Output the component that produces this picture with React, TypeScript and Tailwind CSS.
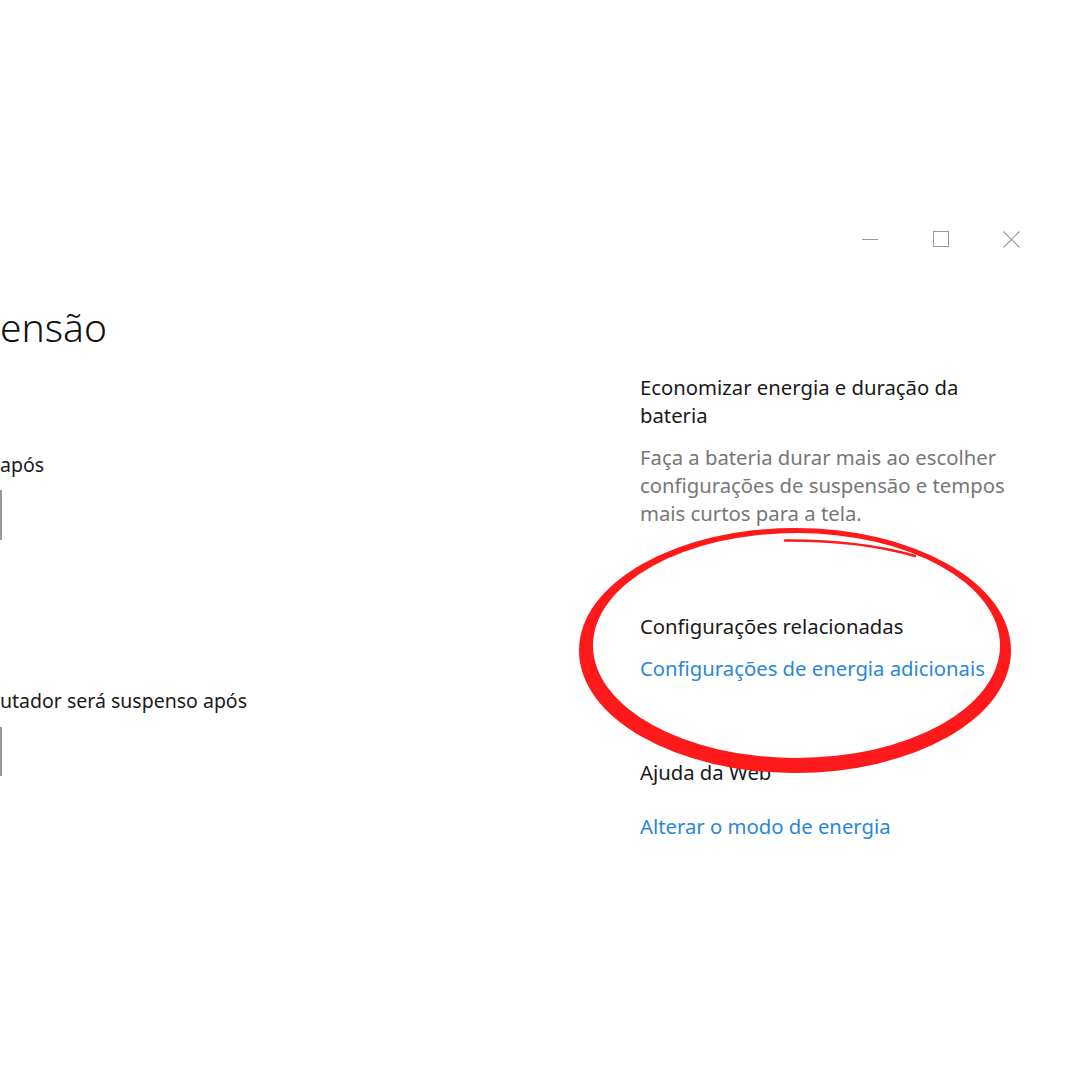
const WinButton = ({ children }: { children: React.ReactNode }) => (
  <div className="w-[71px] h-[32px] flex items-center justify-center">{children}</div>
);

const RedCircle = () => (
  <svg className="absolute left-0 top-0 pointer-events-none" width="1080" height="1080" viewBox="0 0 1080 1080">
    <path
      fillRule="evenodd"
      fill="#fe1a1a"
      d="M579 650.5 A216 122.5 0 1 0 1011 650.5 A216 122.5 0 1 0 579 650.5 Z M593 645.5 A203.5 112.5 0 1 0 1000 645.5 A203.5 112.5 0 1 0 593 645.5 Z"
    />
    <path d="M785 540.5 Q 860 540 915 556" stroke="#fe1a1a" strokeWidth="2.5" fill="none" strokeLinecap="round" />
    <path d="M870 533 Q 888 536 896 540" stroke="#ffffff" strokeWidth="3" fill="none" />
  </svg>
);

export default function App() {
  return (
    <div
      className="w-[1080px] h-[1080px] bg-white relative overflow-hidden text-[#1a1a1a]"
      style={{ fontFamily: '"Noto Sans", "Open Sans", sans-serif' }}
    >
      {/* window controls */}
      <div className="flex justify-end pt-[223px] pr-[33px]">
        <WinButton>
          <svg width="16" height="16" viewBox="0 0 16 16">
            <path d="M0 8.5 H16" stroke="#999" strokeWidth="1" />
          </svg>
        </WinButton>
        <WinButton>
          <svg width="16" height="16" viewBox="0 0 16 16">
            <rect x="0.5" y="0.5" width="15" height="15" stroke="#999" strokeWidth="1" fill="none" />
          </svg>
        </WinButton>
        <WinButton>
          <svg width="17" height="17" viewBox="0 0 17 17">
            <path d="M0.5 0.5 L16.5 16.5 M16.5 0.5 L0.5 16.5" stroke="#999" strokeWidth="1.1" fill="none" />
          </svg>
        </WinButton>
      </div>

      <div className="flex">
        {/* left column, cut off by the screen edge */}
        <div className="w-[640px] flex flex-col items-start">
          <div className="mt-[48px] text-[39px] leading-[48px] font-light text-[#111]">ensão</div>
          <div className="mt-[100px] text-[19.5px] leading-[28px]">após</div>
          <div className="mt-[11px] w-[2px] h-[50px] bg-[#999]" />
          <div className="mt-[147px] text-[19.5px] leading-[28px]">utador será suspenso após</div>
          <div className="mt-[12px] w-[2px] h-[49px] bg-[#999]" />
        </div>

        {/* right column */}
        <div className="w-[390px] mt-[118px] text-[20.3px] leading-[28px]">
          <div className="w-[340px]">Economizar energia e duração da bateria</div>
          <p className="mt-[14px] text-[#777] w-[385px]">
            Faça a bateria durar mais ao escolher configurações de suspensão e tempos mais curtos para a tela.
          </p>
          <div className="mt-[85px]">Configurações relacionadas</div>
          <div className="mt-[14px] text-[#2a88d8]">Configurações de energia adicionais</div>
          <div className="mt-[76px]">Ajuda da Web</div>
          <div className="mt-[26px] text-[#2a88d8]">Alterar o modo de energia</div>
        </div>
      </div>

      <RedCircle />
    </div>
  );
}
